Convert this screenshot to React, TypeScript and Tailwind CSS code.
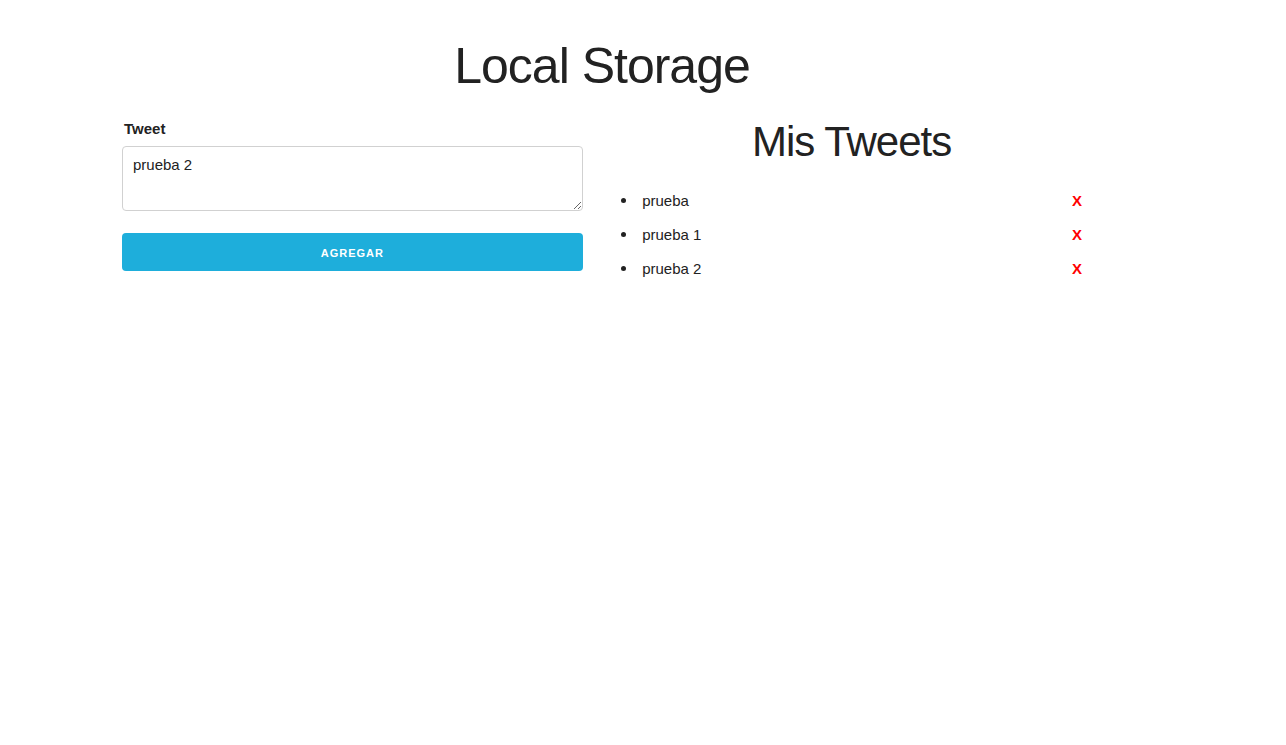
import React from "react";

const tweets = ["prueba", "prueba 1", "prueba 2"];

export default function App() {
  return (
    <div
      className="min-h-[745px] bg-white text-[#222] text-[15px] leading-[1.6]"
      style={{ fontFamily: '"Liberation Sans", Arial, sans-serif' }}
    >
      <div className="ml-[122px] w-[960px] pt-[36px]">
        <h1 className="text-center text-[50px] leading-[1.2] tracking-[-1px] font-normal mb-[20px]">
          Local Storage
        </h1>
        <div className="flex gap-[38.4px]">
          <div className="w-[460.8px]">
            <label className="block font-bold ml-[2px] pt-[1px] mb-[5px]">Tweet</label>
            <textarea
              defaultValue="prueba 2"
              className="block w-full h-[65px] min-h-[65px] border border-[#D1D1D1] rounded-[4px] px-[10px] py-[6px] text-[15px] leading-[24px] text-[#222] outline-none"
              style={{ fontFamily: '"Liberation Sans", Arial, sans-serif' }}
            />
            <button className="mt-[22px] block w-full h-[38px] pt-[3px] rounded-[4px] bg-[#1EAEDB] text-white text-[11px] font-bold tracking-[1px] uppercase">
              Agregar
            </button>
          </div>
          <div className="w-[460.8px]">
            <h2 className="text-center text-[42px] leading-[1.25] tracking-[-1px] font-normal mb-[20px]">
              Mis Tweets
            </h2>
            <ul>
              {tweets.map((t) => (
                <li key={t} className="flex items-center justify-between h-[24px] mb-[10px]">
                  <span className="flex items-center">
                    <span className="w-[5px] h-[5px] rounded-full bg-[#222] mr-[16px]" />
                    <span>{t}</span>
                  </span>
                  <span className="text-[#ff0000] font-bold">X</span>
                </li>
              ))}
            </ul>
          </div>
        </div>
      </div>
    </div>
  );
}
